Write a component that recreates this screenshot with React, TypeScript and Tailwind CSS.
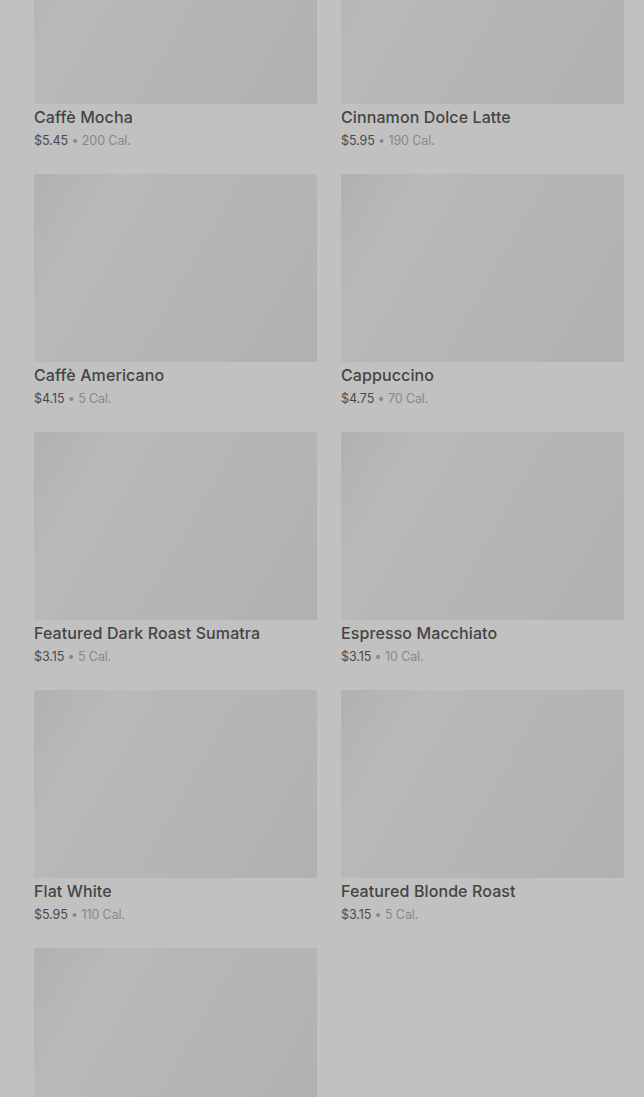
const ITEMS = [
  { name: "Caffè Mocha", price: "$5.45", cal: "200 Cal." },
  { name: "Cinnamon Dolce Latte", price: "$5.95", cal: "190 Cal." },
  { name: "Caffè Americano", price: "$4.15", cal: "5 Cal." },
  { name: "Cappuccino", price: "$4.75", cal: "70 Cal." },
  { name: "Featured Dark Roast Sumatra", price: "$3.15", cal: "5 Cal." },
  { name: "Espresso Macchiato", price: "$3.15", cal: "10 Cal." },
  { name: "Flat White", price: "$5.95", cal: "110 Cal." },
  { name: "Featured Blonde Roast", price: "$3.15", cal: "5 Cal." },
  { name: "", price: "", cal: "" },
];

function Card({ name, price, cal }: { name: string; price: string; cal: string }) {
  return (
    <div className="flex flex-col">
      <div className="h-[188px] rounded-[2px] bg-[linear-gradient(120deg,#b1b1b1_0%,#b9b9b9_22%,#b6b6b6_45%,#b4b4b4_70%,#b1b1b1_100%)]" />
      {name && (
        <>
          <p className="mt-[3px] text-[16px] leading-5 font-medium text-[#444] tracking-[0.1px]">{name}</p>
          <p className="mt-[5px] text-[12.5px] leading-[18px] text-[#4a4a4a] tracking-[-0.1px]">
            {price} <span className="text-[#888]">• {cal}</span>
          </p>
        </>
      )}
    </div>
  );
}

export default function App() {
  return (
    <div className="h-[1097px] overflow-hidden bg-[#c1c1c1]" style={{ fontFamily: "Inter, 'Liberation Sans', sans-serif" }}>
      <div className="grid grid-cols-2 gap-x-6 gap-y-6 pl-[34px] pr-5 -mt-[84px]">
        {ITEMS.map((it, i) => (
          <Card key={i} {...it} />
        ))}
      </div>
    </div>
  );
}
